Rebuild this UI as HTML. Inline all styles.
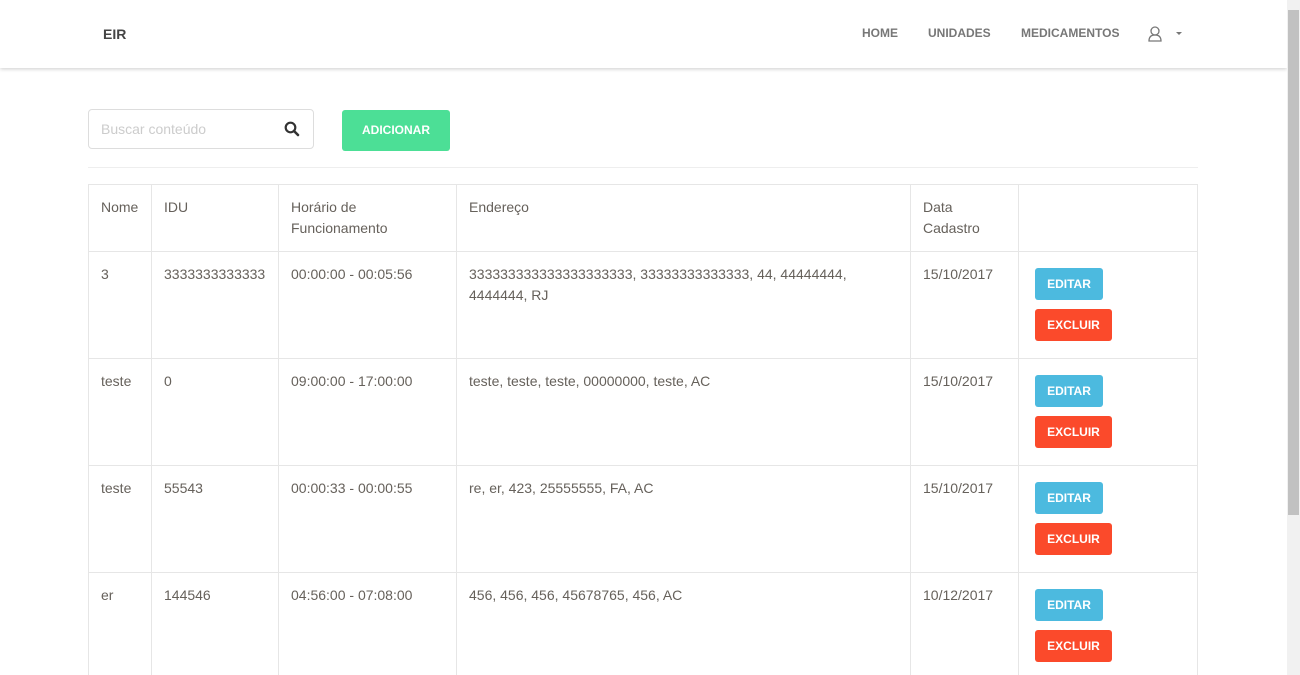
<!DOCTYPE html><html><head><style>
body{margin:0;width:1300px;height:675px;overflow:hidden;background:#fff;font-family:"Liberation Sans",sans-serif;color:#66615b;position:relative}
.a{position:absolute}
.nav{left:0;top:0;width:1287px;height:68px;background:#fff;box-shadow:0 1px 4px rgba(0,0,0,.2)}
.nl{font-size:12px;font-weight:bold;color:#777;top:26px}
.t{font-size:14px;line-height:21px}
.v{width:1px;background:#e6e6e6}
.h{height:1px;background:#e6e6e6;left:88px;width:1110px}
.b{font-size:12px;font-weight:bold;color:#fff;text-align:center;border-radius:3px;line-height:32px;height:32px}
.e{background:#4cbadf;width:68px}.x{background:#fb4a2b;width:77px}
</style></head><body>
<div class="a nav"></div>
<div class="a" style="left:103px;top:26px;font-size:14px;font-weight:bold;color:#444">EIR</div>
<div class="a nl" style="left:862px">HOME</div>
<div class="a nl" style="left:928px">UNIDADES</div>
<div class="a nl" style="left:1021px">MEDICAMENTOS</div>
<svg class="a" style="left:1147px;top:25px" width="40" height="18"><circle cx="8" cy="6" r="4" fill="none" stroke="#777" stroke-width="1.3"/><path d="M2 16 Q2 10 8 10 Q14 10 14 16 Z" fill="none" stroke="#777" stroke-width="1.3"/><path d="M29 7 L35 7 L32 10Z" fill="#777"/></svg>
<div class="a" style="left:1287px;top:0;width:13px;height:675px;background:#f1f1f1"></div>
<div class="a" style="left:1288px;top:10px;width:11px;height:505px;background:#c1c1c1"></div>
<div class="a" style="left:88px;top:109px;width:224px;height:38px;border:1px solid #ddd;border-radius:4px"></div>
<div class="a" style="left:101px;top:121px;font-size:14px;color:#ccc">Buscar conteúdo</div>
<svg class="a" style="left:284px;top:121px" width="16" height="16"><circle cx="6.5" cy="6.5" r="4.8" fill="none" stroke="#333" stroke-width="2.2"/><path d="M10 10 L14 14" stroke="#333" stroke-width="2.6" stroke-linecap="round"/></svg>
<div class="a b" style="left:342px;top:110px;width:108px;height:41px;line-height:41px;background:#4cdf96">ADICIONAR</div>
<div class="a h" style="top:167px;background:#eee"></div>
<div class="a h" style="top:184px"></div><div class="a h" style="top:251px"></div><div class="a h" style="top:358px"></div><div class="a h" style="top:465px"></div><div class="a h" style="top:572px"></div>
<div class="a v" style="left:88px;top:184px;height:491px"></div><div class="a v" style="left:151px;top:184px;height:491px"></div><div class="a v" style="left:278px;top:184px;height:491px"></div><div class="a v" style="left:456px;top:184px;height:491px"></div><div class="a v" style="left:910px;top:184px;height:491px"></div><div class="a v" style="left:1018px;top:184px;height:491px"></div><div class="a v" style="left:1197px;top:184px;height:491px"></div>
<div class="a t" style="left:101px;top:197px">Nome</div><div class="a t" style="left:164px;top:197px">IDU</div><div class="a t" style="left:291px;top:197px">Horário de<br>Funcionamento</div><div class="a t" style="left:469px;top:197px">Endereço</div><div class="a t" style="left:923px;top:197px">Data<br>Cadastro</div>
<div class="a t" style="left:101px;top:264px">3</div><div class="a t" style="left:164px;top:264px">3333333333333</div><div class="a t" style="left:291px;top:264px">00:00:00 - 00:05:56</div><div class="a t" style="left:469px;top:264px">333333333333333333333, 33333333333333, 44, 44444444,<br>4444444, RJ</div><div class="a t" style="left:923px;top:264px">15/10/2017</div>
<div class="a t" style="left:101px;top:371px">teste</div><div class="a t" style="left:164px;top:371px">0</div><div class="a t" style="left:291px;top:371px">09:00:00 - 17:00:00</div><div class="a t" style="left:469px;top:371px">teste, teste, teste, 00000000, teste, AC</div><div class="a t" style="left:923px;top:371px">15/10/2017</div>
<div class="a t" style="left:101px;top:478px">teste</div><div class="a t" style="left:164px;top:478px">55543</div><div class="a t" style="left:291px;top:478px">00:00:33 - 00:00:55</div><div class="a t" style="left:469px;top:478px">re, er, 423, 25555555, FA, AC</div><div class="a t" style="left:923px;top:478px">15/10/2017</div>
<div class="a t" style="left:101px;top:585px">er</div><div class="a t" style="left:164px;top:585px">144546</div><div class="a t" style="left:291px;top:585px">04:56:00 - 07:08:00</div><div class="a t" style="left:469px;top:585px">456, 456, 456, 45678765, 456, AC</div><div class="a t" style="left:923px;top:585px">10/12/2017</div>
<div class="a b e" style="left:1035px;top:268px">EDITAR</div><div class="a b x" style="left:1035px;top:309px">EXCLUIR</div>
<div class="a b e" style="left:1035px;top:375px">EDITAR</div><div class="a b x" style="left:1035px;top:416px">EXCLUIR</div>
<div class="a b e" style="left:1035px;top:482px">EDITAR</div><div class="a b x" style="left:1035px;top:523px">EXCLUIR</div>
<div class="a b e" style="left:1035px;top:589px">EDITAR</div><div class="a b x" style="left:1035px;top:630px">EXCLUIR</div>
</body></html>
